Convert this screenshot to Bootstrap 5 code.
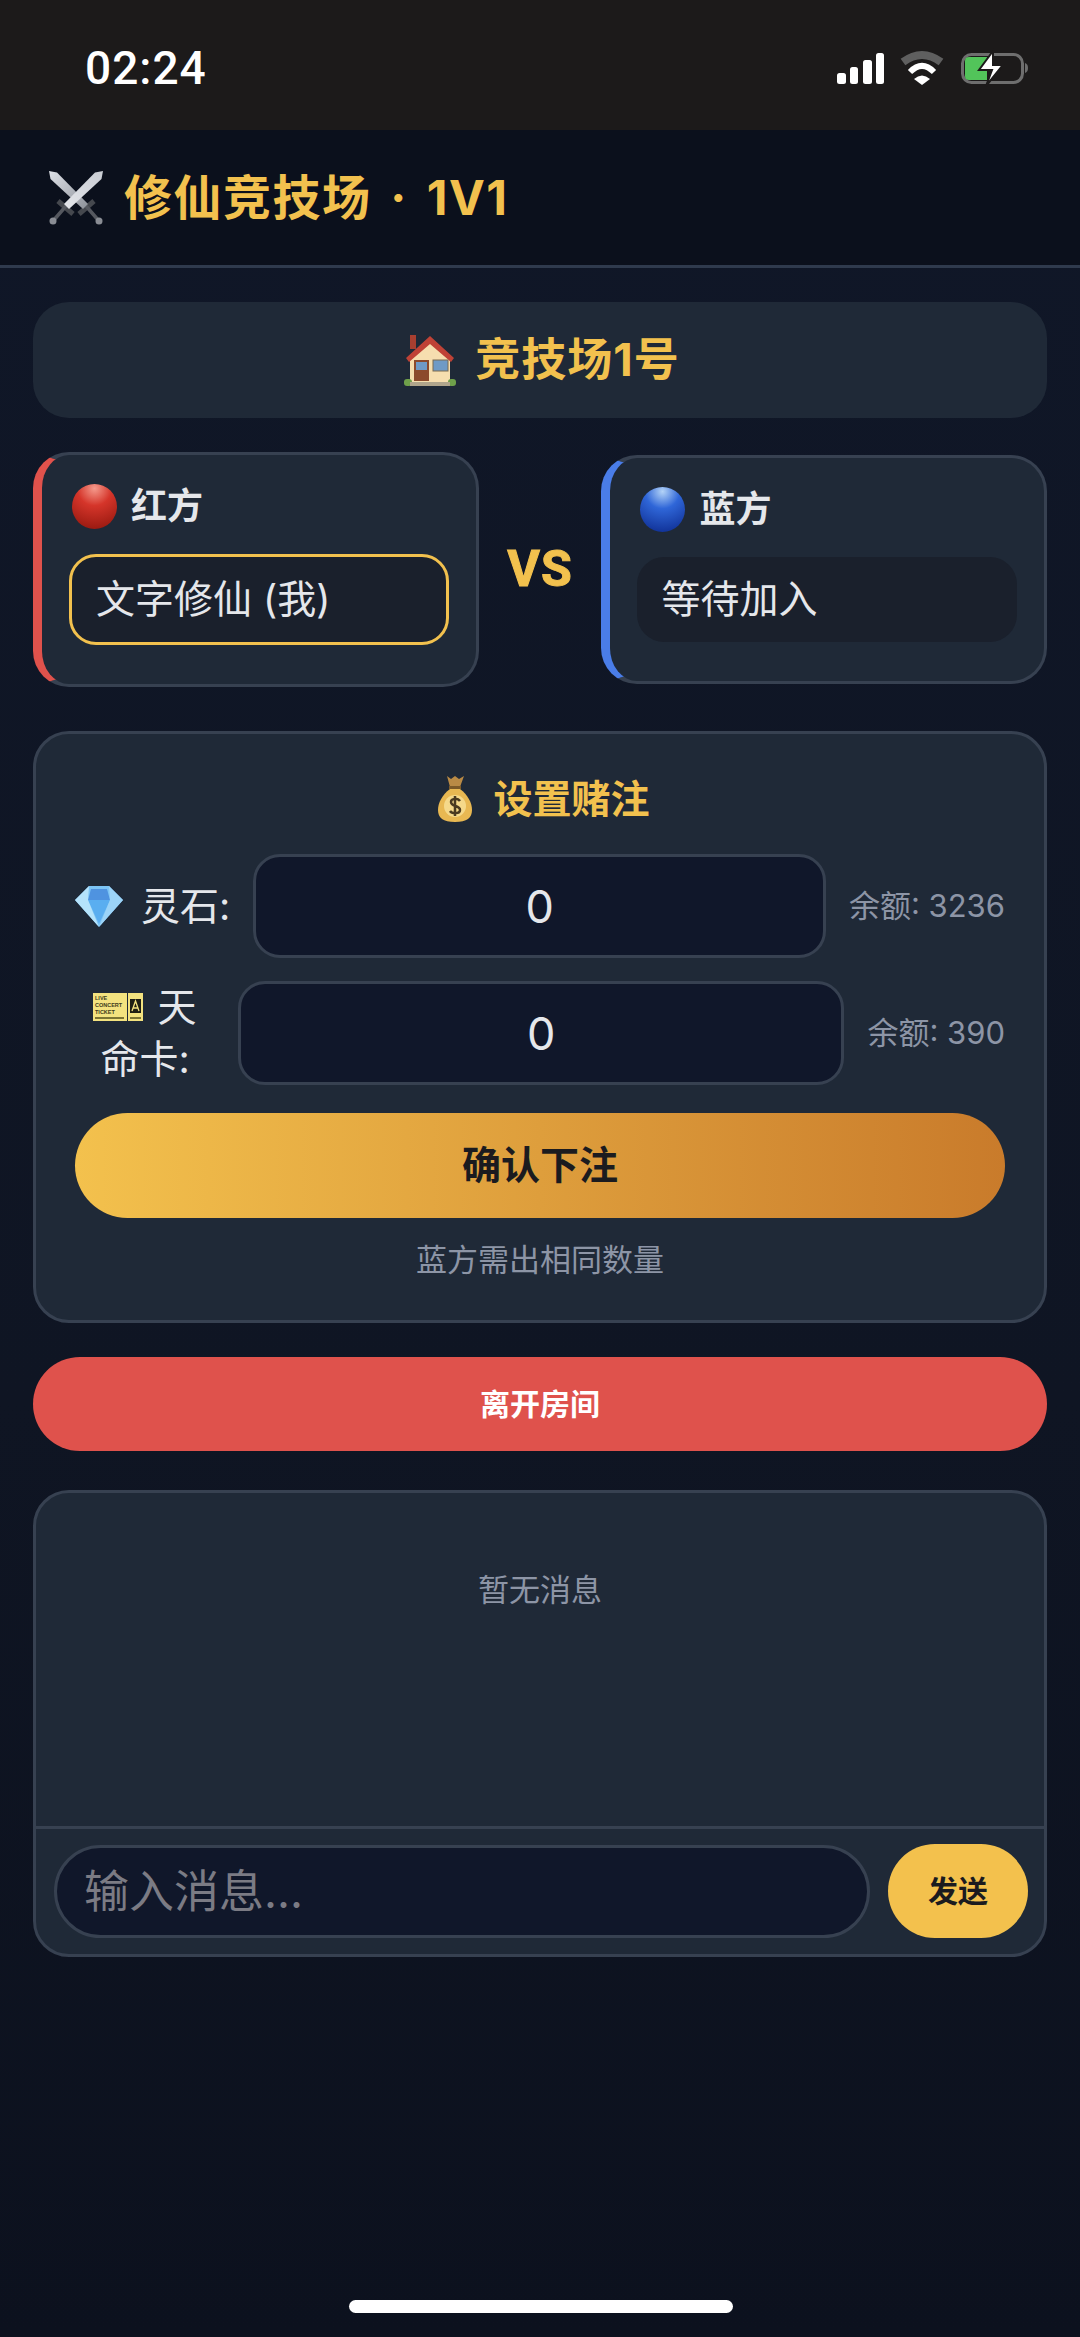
<!DOCTYPE html>
<html lang="zh-CN" data-bs-theme="dark">
  <head>
    <meta charset="UTF-8" />
    <meta name="viewport" content="width=device-width, initial-scale=1.0" />
    <title>修仙竞技场</title>
    <link href="https://cdn.jsdelivr.net/npm/bootstrap@5.3.0/dist/css/bootstrap.min.css" rel="stylesheet" />
    <style>
      body {
        width: 1080px;
        min-height: 2337px;
        background: linear-gradient(180deg, #101728 0%, #0f1523 60%, #0c111e 100%);
        font-family: Inter, "Noto Sans CJK SC", sans-serif;
        color: #e5e7eb;
        position: relative;
      }

      /* status bar */
      .status-top {
        height: 130px;
        background: #1c1a1a;
        padding: 6px 48px 0 85px;
      }
      .status-time {
        font-family: Roboto, sans-serif;
        font-size: 46px;
        font-weight: 500;
        letter-spacing: 1px;
        color: #fff;
        line-height: 1;
      }

      /* header */
      .arena-head {
        height: 138px;
        background: #0b101c;
        border-bottom: 3px solid #2f3a4d;
        padding: 0 49px;
        gap: 21px;
      }
      .arena-title {
        font-size: 48px;
        font-weight: 700;
        letter-spacing: 1.5px;
        word-spacing: 6px;
        color: #f2c14e;
        margin: 0;
        line-height: 1;
      }

      .arena-main {
        padding: 34px 33px 0;
      }
      .room-box {
        height: 116px;
        background: #1f2937;
        border-radius: 36px;
        color: #f2c14e;
        font-size: 45px;
        font-weight: 700;
        letter-spacing: 1px;
        gap: 19px;
        margin-bottom: 34px;
        padding-left: 4px;
      }

      /* players */
      .vs-row {
        margin-bottom: 44px;
      }
      .side-box {
        width: 446px;
        background: #1f2937;
        border: 3px solid #374151;
        border-radius: 36px;
        padding: 24px 27px 39px;
      }
      .side-red {
        border-left: 9px solid #e0524c;
      }
      .side-blue {
        border-left: 9px solid #4a7de8;
      }
      .side-label {
        font-size: 36px;
        font-weight: 600;
        line-height: 54px;
        gap: 14px;
        margin-bottom: 21px;
        padding-left: 3px;
      }
      .side-slot {
        height: 85px;
        background: #1a202c;
        border-radius: 27px;
        font-size: 39px;
        padding: 0 24px;
      }
      .slot-me {
        height: 91px;
        border: 3px solid #f2c14e;
      }
      .vs-text {
        width: 123px;
        text-align: center;
        font-family: Roboto, sans-serif;
        font-size: 50px;
        font-weight: 700;
        letter-spacing: 1px;
        -webkit-text-stroke: 1px #f2c14e;
        color: #f2c14e;
      }

      /* bet */
      .bet-box {
        background: #1f2937;
        border: 3px solid #374151;
        border-radius: 36px;
        padding: 36px 39px 33px;
        margin-bottom: 34px;
      }
      .bet-title {
        font-size: 39px;
        font-weight: 700;
        color: #f2c14e;
        line-height: 58px;
        gap: 21px;
        margin-bottom: 26px;
        padding-left: 8px;
      }
      .bet-row {
        gap: 23px;
        margin-bottom: 23px;
      }
      .bet-label {
        font-size: 39px;
        line-height: 52px;
        text-align: center;
        flex: none;
      }
      .label-stone {
        white-space: nowrap;
      }
      .stone-icon {
        margin: -6px 18px 0 0;
        vertical-align: middle;
      }
      .label-card {
        width: 140px;
      }
      .ticket-icon {
        margin-right: 14px;
        vertical-align: baseline;
      }
      .ticket-icon text {
        font-family: "Liberation Sans", sans-serif;
        font-weight: 700;
        font-size: 5.500px;
        fill: #3e3a1c;
      }
      .bet-input.form-control {
        height: 104px;
        background: #10172a;
        border: 3px solid #374151;
        border-radius: 27px;
        color: #e5e7eb;
        font-size: 45px;
        text-align: center;
      }
      .bet-left {
        font-size: 31px;
        color: #8d95a6;
        white-space: nowrap;
        flex: none;
      }
      .btn.btn-confirm {
        height: 105px;
        margin-top: 28px;
        border: 0;
        border-radius: 53px;
        background: linear-gradient(90deg, #f3c14d, #c97b2b);
        color: #1b1b1f;
        font-size: 39px;
        font-weight: 700;
      }
      .bet-note {
        font-size: 31px;
        line-height: 46px;
        color: #8d95a6;
        text-align: center;
        margin-top: 19px;
        margin-bottom: 4px;
      }
      .btn.btn-leave {
        height: 94px;
        border: 0;
        border-radius: 47px;
        background: #df524c;
        color: #fff;
        font-size: 30px;
        font-weight: 700;
        margin-bottom: 39px;
      }

      /* chat */
      .chat-box {
        background: #1f2937;
        border: 3px solid #374151;
        border-radius: 36px;
        overflow: hidden;
      }
      .chat-list {
        height: 333px;
        padding-top: 74px;
        font-size: 31px;
        line-height: 46px;
        color: #8d95a6;
        text-align: center;
      }
      .chat-send {
        border-top: 3px solid #374151;
        padding: 15px 16px 16px 18px;
        gap: 18px;
      }
      .chat-input.form-control {
        height: 93px;
        background: #10172a;
        border: 3px solid #374151;
        border-radius: 47px;
        color: #e5e7eb;
        font-size: 45px;
        padding: 0 27px;
      }
      .chat-input.form-control::placeholder {
        color: #7b7b84;
      }
      .btn.btn-send {
        width: 140px;
        height: 94px;
        flex: none;
        border: 0;
        border-radius: 47px;
        background: #f3c14d;
        color: #1b1b1f;
        font-size: 30px;
        font-weight: 700;
        padding: 0;
      }
      .home-bar {
        position: absolute;
        left: 349px;
        bottom: 24px;
        width: 384px;
        height: 13px;
        border-radius: 7px;
        background: #fff;
      }
    </style>
  </head>
  <body>
    <!-- status bar -->
    <div class="status-top d-flex align-items-center justify-content-between">
      <span class="status-time">02:24</span>
      <svg width="195" height="40" viewBox="0 0 195 40">
        <rect x="0" y="25" width="9" height="11" rx="2.500" fill="#fff" />
        <rect x="13" y="19" width="8" height="17" rx="2.500" fill="#fff" />
        <rect x="26" y="12" width="9" height="24" rx="2.500" fill="#fff" />
        <rect x="39" y="5" width="8" height="31" rx="2.500" fill="#fff" />
        <path d="M66 14 Q85 0 104 14" fill="none" stroke="#5f5f5f" stroke-width="8" />
        <path d="M73 24 Q85 12 97 24" fill="none" stroke="#fff" stroke-width="6" />
        <path d="M77 31 Q85 24 93 31 L85 37 Z" fill="#fff" />
        <rect x="125.500" y="6.500" width="60" height="28" rx="9" fill="none" stroke="#6e6e6e" stroke-width="3" />
        <path d="M188 15 C192 16 192 24 188 25 Z" fill="#6e6e6e" />
        <path d="M128 13 Q128 9 132 9 H150 V32 H132 Q128 32 128 28 Z" fill="#52c45a" />
        <path d="M156 3 L142 22 H155 L149 38 L166 17 H156 Z" fill="#fff" stroke="#1c1a1a" stroke-width="2" />
      </svg>
    </div>

    <!-- header -->
    <header class="arena-head d-flex align-items-center">
      <svg width="54" height="54" viewBox="0 0 54 54">
        <defs>
          <linearGradient id="blade" x1="0" y1="0" x2="1" y2="1">
            <stop offset="0" stop-color="#dfe2e8" />
            <stop offset="1" stop-color="#8d9199" />
          </linearGradient>
          <linearGradient id="blade2" x1="1" y1="0" x2="0" y2="1">
            <stop offset="0" stop-color="#c9ccd3" />
            <stop offset="1" stop-color="#e4e6ea" />
          </linearGradient>
        </defs>
        <path d="M9 30 L24 43 M45 30 L30 43" stroke="#45484e" stroke-width="5" />
        <path d="M17 35 L4 50 M37 35 L50 50" stroke="#55585f" stroke-width="3.500" />
        <circle cx="4" cy="50" r="3.500" fill="#8a8d94" />
        <circle cx="50" cy="50" r="3.500" fill="#8a8d94" />
        <path d="M0 0 L8 1.500 L39 33 L34 38 L1.500 8 Z" fill="url(#blade)" />
        <path d="M54 0 L46 1.500 L15 33 L20 38 L52.500 8 Z" fill="url(#blade2)" />
      </svg>
      <h1 class="arena-title">修仙竞技场 · 1V1</h1>
    </header>

    <main class="arena-main">
      <div class="room-box d-flex align-items-center justify-content-center">
        <svg width="52" height="54" viewBox="0 0 52 54">
          <rect x="6" y="2" width="6" height="14" fill="#a83f30" />
          <path d="M6 25 V49 H46 V25 L26 8 Z" fill="#f6deaf" />
          <path d="M2 25 L26 3 L50 25 L47 29 L26 11 L5 29 Z" fill="#bf4236" />
          <rect x="10" y="27" width="15" height="21" fill="#8c4a2c" />
          <rect x="12" y="29" width="11" height="8" fill="#6f9ac6" />
          <rect x="29" y="27" width="15" height="11" fill="#6f9ac6" stroke="#7a6a50" />
          <rect x="0" y="46" width="8" height="7" rx="3" fill="#6fa04a" />
          <rect x="44" y="46" width="8" height="7" rx="3" fill="#6fa04a" />
          <rect x="6" y="49" width="40" height="4" fill="#b0a58c" />
        </svg>
        <span>竞技场1号</span>
      </div>

      <div class="vs-row d-flex align-items-center">
        <div class="side-box side-red">
          <div class="side-label d-flex align-items-center">
            <svg width="45" height="45" viewBox="0 0 45 45">
              <defs>
                <radialGradient id="redBall" cx="0.5" cy="0.1" r="0.95">
                  <stop offset="0" stop-color="#f59a8c" />
                  <stop offset="0.4" stop-color="#d5352a" />
                  <stop offset="1" stop-color="#96180f" />
                </radialGradient>
              </defs>
              <circle cx="22.500" cy="22.500" r="22.500" fill="url(#redBall)" />
            </svg>
            <span>红方</span>
          </div>
          <div class="side-slot slot-me d-flex align-items-center">文字修仙 (我)</div>
        </div>

        <div class="vs-text">VS</div>

        <div class="side-box side-blue">
          <div class="side-label d-flex align-items-center">
            <svg width="45" height="45" viewBox="0 0 45 45">
              <defs>
                <radialGradient id="blueBall" cx="0.5" cy="0.1" r="0.95">
                  <stop offset="0" stop-color="#b3d3f7" />
                  <stop offset="0.4" stop-color="#2f66d8" />
                  <stop offset="1" stop-color="#0f2f94" />
                </radialGradient>
              </defs>
              <circle cx="22.500" cy="22.500" r="22.500" fill="url(#blueBall)" />
            </svg>
            <span>蓝方</span>
          </div>
          <div class="side-slot d-flex align-items-center">等待加入</div>
        </div>
      </div>

      <section class="bet-box">
        <div class="bet-title d-flex align-items-center justify-content-center">
          <svg width="34" height="46" viewBox="0 0 34 46">
            <path d="M9 0 L13 3 L17 0 L21 3 L26 0 L22 11 H12 Z" fill="#b98a45" />
            <rect x="11" y="10" width="12" height="3" fill="#7d5a28" />
            <path d="M12 13 H22 C30 19 34 27 34 34 C34 42 29 46 17 46 C5 46 0 42 0 34 C0 27 4 19 12 13 Z" fill="#e8b852" />
            <circle cx="17" cy="30" r="11" fill="#f5d98a" />
            <path d="M22 25 C20 22 13 22 13 26 C13 31 22 29 22 34 C22 38 14 38 12 35 M17 20 V40" fill="none" stroke="#4a3a20" stroke-width="2.500" />
          </svg>
          <span>设置赌注</span>
        </div>

        <div class="bet-row d-flex align-items-center">
          <label class="bet-label label-stone">
            <svg class="stone-icon" width="48" height="41" viewBox="0 0 48 41">
              <path d="M14 0 H34 L48 14 L24 41 L0 14 Z" fill="#7cc4f5" />
              <path d="M16 3 H32 L35 14 H13 Z" fill="#4f93e0" />
              <path d="M13 14 H35 L24 38 Z" fill="#5aaef0" />
              <path d="M0 14 L14 0 L13 14 L24 41 Z" fill="#b5e3fb" />
              <path d="M48 14 L34 0 L35 14 L24 41 Z" fill="#9cd4f8" />
            </svg>灵石:
          </label>
          <input class="bet-input form-control flex-grow-1" type="text" value="0" />
          <span class="bet-left">余额: 3236</span>
        </div>

        <div class="bet-row d-flex align-items-center">
          <label class="bet-label label-card">
            <svg class="ticket-icon" width="50" height="28" viewBox="0 0 50 28">
              <rect width="34" height="28" fill="#f3e27f" />
              <rect x="35" width="15" height="28" fill="#f3e27f" />
              <rect x="37" y="6" width="11" height="14" fill="#1e1e14" />
              <path d="M39 18 L42.500 8 L46 18 M40 15 H45" fill="none" stroke="#f3e27f" stroke-width="1.300" />
              <text x="2" y="7">LIVE</text>
              <text x="2" y="14">CONCERT</text>
              <text x="2" y="21">TICKET</text>
              <rect x="2" y="24" width="29" height="2" fill="#7c7434" />
              <rect x="37" y="24" width="11" height="2" fill="#7c7434" />
            </svg>天<br />命卡:
          </label>
          <input class="bet-input form-control flex-grow-1" type="text" value="0" />
          <span class="bet-left">余额: 390</span>
        </div>

        <button class="btn btn-confirm w-100 d-block" type="button">确认下注</button>
        <p class="bet-note">蓝方需出相同数量</p>
      </section>

      <button class="btn btn-leave w-100 d-block" type="button">离开房间</button>

      <section class="chat-box">
        <div class="chat-list">暂无消息</div>
        <div class="chat-send d-flex align-items-center">
          <input class="chat-input form-control flex-grow-1" type="text" placeholder="输入消息..." />
          <button class="btn btn-send" type="button">发送</button>
        </div>
      </section>
    </main>

    <div class="home-bar"></div>

    <script src="https://cdn.jsdelivr.net/npm/bootstrap@5.3.0/dist/js/bootstrap.bundle.min.js"></script>
  </body>
</html>
